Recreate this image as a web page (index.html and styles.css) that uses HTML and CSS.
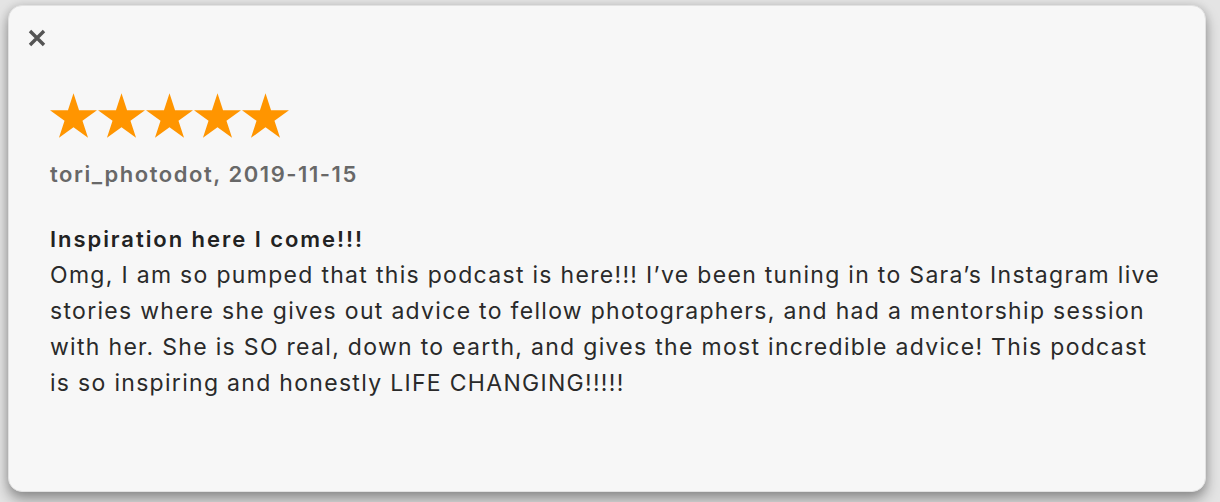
FILE: index.html
```html
<!DOCTYPE html>
<html>
<head>
<meta charset="utf-8">
<link rel="stylesheet" href="styles.css">
</head>
<body>
<div class="backdrop">
  <div class="modal">
    <button class="close" aria-label="Close">
      <svg width="18" height="18" viewBox="0 0 18 18"><path d="M2 2L16 16M16 2L2 16" stroke="#555" stroke-width="3.4" stroke-linecap="butt"/></svg>
    </button>
    <div class="stars">
      <svg class="star" viewBox="2.45 0 95.1 90.45"><polygon points="50,0 61.23,34.55 97.55,34.55 68.16,55.9 79.39,90.45 50,69.1 20.61,90.45 31.84,55.9 2.45,34.55 38.77,34.55"/></svg>
      <svg class="star" viewBox="2.45 0 95.1 90.45"><polygon points="50,0 61.23,34.55 97.55,34.55 68.16,55.9 79.39,90.45 50,69.1 20.61,90.45 31.84,55.9 2.45,34.55 38.77,34.55"/></svg>
      <svg class="star" viewBox="2.45 0 95.1 90.45"><polygon points="50,0 61.23,34.55 97.55,34.55 68.16,55.9 79.39,90.45 50,69.1 20.61,90.45 31.84,55.9 2.45,34.55 38.77,34.55"/></svg>
      <svg class="star" viewBox="2.45 0 95.1 90.45"><polygon points="50,0 61.23,34.55 97.55,34.55 68.16,55.9 79.39,90.45 50,69.1 20.61,90.45 31.84,55.9 2.45,34.55 38.77,34.55"/></svg>
      <svg class="star" viewBox="2.45 0 95.1 90.45"><polygon points="50,0 61.23,34.55 97.55,34.55 68.16,55.9 79.39,90.45 50,69.1 20.61,90.45 31.84,55.9 2.45,34.55 38.77,34.55"/></svg>
    </div>
    <div class="author">tori_photodot, 2019-11-15</div>
    <div class="review">
      <div class="title">Inspiration here I come!!!</div>
      <p class="body">Omg, I am so pumped that this podcast is here!!! I’ve been tuning in to Sara’s Instagram live stories where she gives out advice to fellow photographers, and had a mentorship session with her. She is SO real, down to earth, and gives the most incredible advice! This podcast is so inspiring and honestly LIFE CHANGING!!!!!</p>
    </div>
  </div>
</div>
</body>
</html>
```
FILE: styles.css
```css
html, body {
  margin: 0;
  padding: 0;
  height: 100%;
}
body {
  background: #e4e4e4;
  font-family: Inter, "Open Sans", sans-serif;
  overflow: hidden;
}
.backdrop {
  padding: 5px 14px 0 8px;
}
.modal {
  box-sizing: border-box;
  width: 1198px;
  height: 487px;
  background: #f7f7f7;
  border: 1px solid #e2e2e2;
  border-radius: 14px;
  box-shadow: 0 8px 14px rgba(0, 0, 0, 0.35), 0 0 8px rgba(0, 0, 0, 0.12);
  padding: 21px 41px 0 41px;
  position: relative;
}
.close {
  position: absolute;
  left: 19px;
  top: 23px;
  width: 18px;
  height: 18px;
  padding: 0;
  border: 0;
  background: none;
  display: block;
}
.close svg { display: block; }
.stars {
  display: flex;
  gap: 1px;
  margin-top: 66px;
}
.star {
  width: 47px;
  height: 45px;
  fill: #ff9500;
  display: block;
}
.author {
  margin-top: 22px;
  font-size: 22px;
  font-weight: 600;
  letter-spacing: 1.55px;
  color: #686868;
  line-height: 28px;
}
.review {
  margin-top: 33px;
  line-height: 36px;
  color: #2a2a2a;
}
.title {
  font-size: 22px;
  font-weight: 600;
  letter-spacing: 1.95px;
  color: #222;
}
.body {
  margin: 0;
  font-size: 23px;
  letter-spacing: 1.3px;
  max-width: 1112px;
}
```
